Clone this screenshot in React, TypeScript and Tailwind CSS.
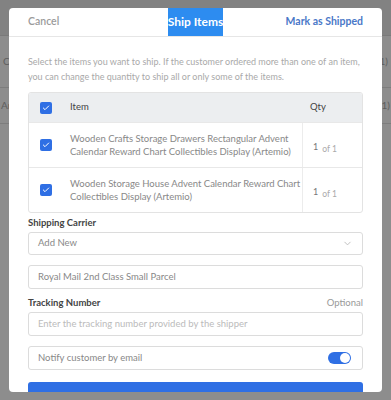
import { Check, ChevronDown } from "lucide-react"

const items = [
  "Wooden Crafts Storage Drawers Rectangular Advent Calendar Reward Chart Collectibles Display (Artemio)",
  "Wooden Storage House Advent Calendar Reward Chart Collectibles Display (Artemio)",
]

function Box() {
  return (
    <div className="w-[12px] h-[12px] rounded-[2px] bg-[#2f6fe4] flex items-center justify-center">
      <Check size={8} strokeWidth={3} className="text-white" />
    </div>
  )
}

export default function App() {
  return (
    <div className="relative w-[391px] h-[400px] overflow-hidden bg-[#8d8d8d] font-['Lato',sans-serif]">
      {/* page behind the backdrop */}
      <div className="flex flex-col text-[10px] text-[#5e5e5e]">
        <div className="h-[36px] bg-[#828282] border-b border-[#7a7a7a]" />
        <div className="h-[52px] border-b border-[#7d7d7d] flex items-center justify-between px-[3px]">
          <span>C</span>
          <span>(1)</span>
        </div>
        <div className="h-[36px] border-b border-[#7d7d7d] flex items-center justify-between px-[1px]">
          <span>Ar</span>
          <span>(1)</span>
        </div>
      </div>

      <div className="absolute left-[9px] top-[8px] w-[373px] h-[384px] bg-white rounded-[4px] overflow-hidden">
        <div className="h-[29px] border-b border-[#e6e6e6] grid grid-cols-3 items-center px-[19px]">
          <span className="text-[10.5px] text-[#9b9b9b] font-semibold">Cancel</span>
          <span className="h-full justify-self-center flex items-center bg-[#2d8cf0] text-white text-[12px] font-bold">Ship Items</span>
          <span className="justify-self-end text-[10.5px] text-[#4a78c8] font-bold whitespace-nowrap">Mark as Shipped</span>
        </div>

        <div className="px-[19px] pt-[17px]">
          <p className="text-[9px] leading-[15px] text-[#a9a9a9]">
            Select the items you want to ship. If the customer ordered more than one of an item, you can change the quantity to ship all or only some of the items.
          </p>

          <div className="mt-[8px] border border-[#e3e3e3] rounded-[3px] overflow-hidden">
            <div className="h-[29px] bg-[#eceef0] flex items-center text-[9.5px] text-[#444]">
              <div className="w-[33px] flex justify-center"><Box /></div>
              <span className="flex-1 pl-[8px]">Item</span>
              <span className="w-[60px] pl-[8px]">Qty</span>
            </div>
            {items.map((t, i) => (
              <div key={i} className="flex border-t border-[#e8e8e8] h-[45px]">
                <div className="w-[33px] flex items-center justify-center"><Box /></div>
                <div className="flex-1 flex items-center text-[9.5px] text-[#888] leading-[13px] pl-[8px] pr-[1px]">{t}</div>
                <div className="w-[60px] border-l border-[#ececec] pl-[10px] pt-[9px] text-[#888]">
                  <span className="text-[#777] text-[9px]">1</span>
                  <span className="ml-[4px] text-[8.5px] text-[#aaa] relative top-[2px]">of 1</span>
                </div>
              </div>
            ))}
          </div>

          <div className="mt-[3px] text-[9.5px] leading-[14px] font-bold text-[#444]">Shipping Carrier</div>
          <div className="mt-[2px] h-[23px] border border-[#dcdcdc] rounded-[3px] flex items-center justify-between px-[9px] text-[9.5px] text-[#888]">
            <span>Add New</span>
            <ChevronDown size={11} className="text-[#bbb]" />
          </div>
          <div className="mt-[10px] h-[24px] border border-[#dcdcdc] rounded-[3px] flex items-center px-[9px] text-[9.5px] text-[#888]">
            Royal Mail 2nd Class Small Parcel
          </div>

          <div className="mt-[7px] flex justify-between text-[9.5px] leading-[14px]">
            <span className="font-bold text-[#444]">Tracking Number</span>
            <span className="text-[#999]">Optional</span>
          </div>
          <div className="mt-[2px] h-[24px] border border-[#dcdcdc] rounded-[3px] flex items-center px-[9px] text-[9.5px] text-[#bbb]">
            Enter the tracking number provided by the shipper
          </div>

          <div className="mt-[10px] h-[24px] border border-[#dcdcdc] rounded-[3px] flex items-center justify-between px-[9px] text-[9.5px] text-[#888]">
            <span>Notify customer by email</span>
            <div className="w-[23px] h-[12px] rounded-full bg-[#2f6fe4] flex items-center justify-end pr-[1px] mr-[2px]">
              <div className="w-[10px] h-[10px] rounded-full bg-white" />
            </div>
          </div>

          <div className="mt-[12px] h-[30px] rounded-[3px] bg-[#2f6fe4] flex items-start justify-center pt-[9px] text-[10px] text-white">
            Fulfill Selected Items
          </div>
        </div>
      </div>
    </div>
  )
}
